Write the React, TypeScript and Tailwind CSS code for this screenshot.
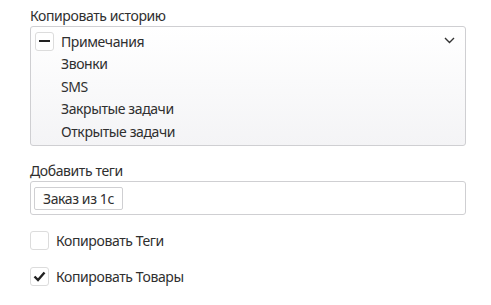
import React from "react";

const items = ["Звонки", "SMS", "Закрытые задачи", "Открытые задачи"];

function Check({ checked }: { checked?: boolean }) {
  return (
    <span className="flex h-[19px] w-[19px] shrink-0 items-center justify-center rounded-[3px] border border-[#dcdcdc] bg-white">
      {checked && (
        <svg width="13" height="11" viewBox="0 0 13 11" fill="none">
          <path d="M1.5 5.5l3.5 3.5L11.5 1.5" stroke="#222" strokeWidth="2.4" />
        </svg>
      )}
    </span>
  );
}

export default function App() {
  return (
    <div
      className="w-[491px] bg-white px-[30px] pt-[5px] text-[14px] tracking-[-0.4px] text-[#2f2f2f]"
      style={{ fontFamily: '"Noto Sans", sans-serif' }}
    >
      <div className="leading-[21px]">Копировать историю</div>
      <div className="relative h-[120px] w-[436px] rounded-[3px] border border-[#cfcfd2] bg-gradient-to-b from-white to-[#f4f4f6] px-[4px] pt-[3px]">
        <div className="flex h-[22.5px] items-center gap-[7px]">
          <span className="flex h-[19px] w-[19px] items-center justify-center rounded-[3px] border border-[#dcdcdc] bg-white">
            <span className="h-[2px] w-[11px] bg-[#222]" />
          </span>
          <span>Примечания</span>
        </div>
        {items.map((t) => (
          <div key={t} className="flex h-[22.5px] items-center pl-[26px]">
            {t}
          </div>
        ))}
        <svg
          className="absolute right-[10px] top-[10px]"
          width="11"
          height="7"
          viewBox="0 0 11 7"
          fill="none"
        >
          <path d="M1 1l4.5 4.5L10 1" stroke="#333" strokeWidth="1.4" />
        </svg>
      </div>

      <div className="mt-[14px] leading-[21px]">Добавить теги</div>
      <div className="flex h-[34px] w-[436px] items-center rounded-[3px] border border-[#cfcfd2] px-[3px]">
        <span className="flex h-[23px] items-center rounded-[2px] border border-[#cfcfd2] px-[8px]">
          Заказ из 1с
        </span>
      </div>

      <label className="mt-[15px] flex items-center gap-[7px] leading-[21px]">
        <Check />
        <span>Копировать Теги</span>
      </label>
      <label className="mt-[15px] flex items-center gap-[7px] leading-[21px]">
        <Check checked />
        <span>Копировать Товары</span>
      </label>
    </div>
  );
}
